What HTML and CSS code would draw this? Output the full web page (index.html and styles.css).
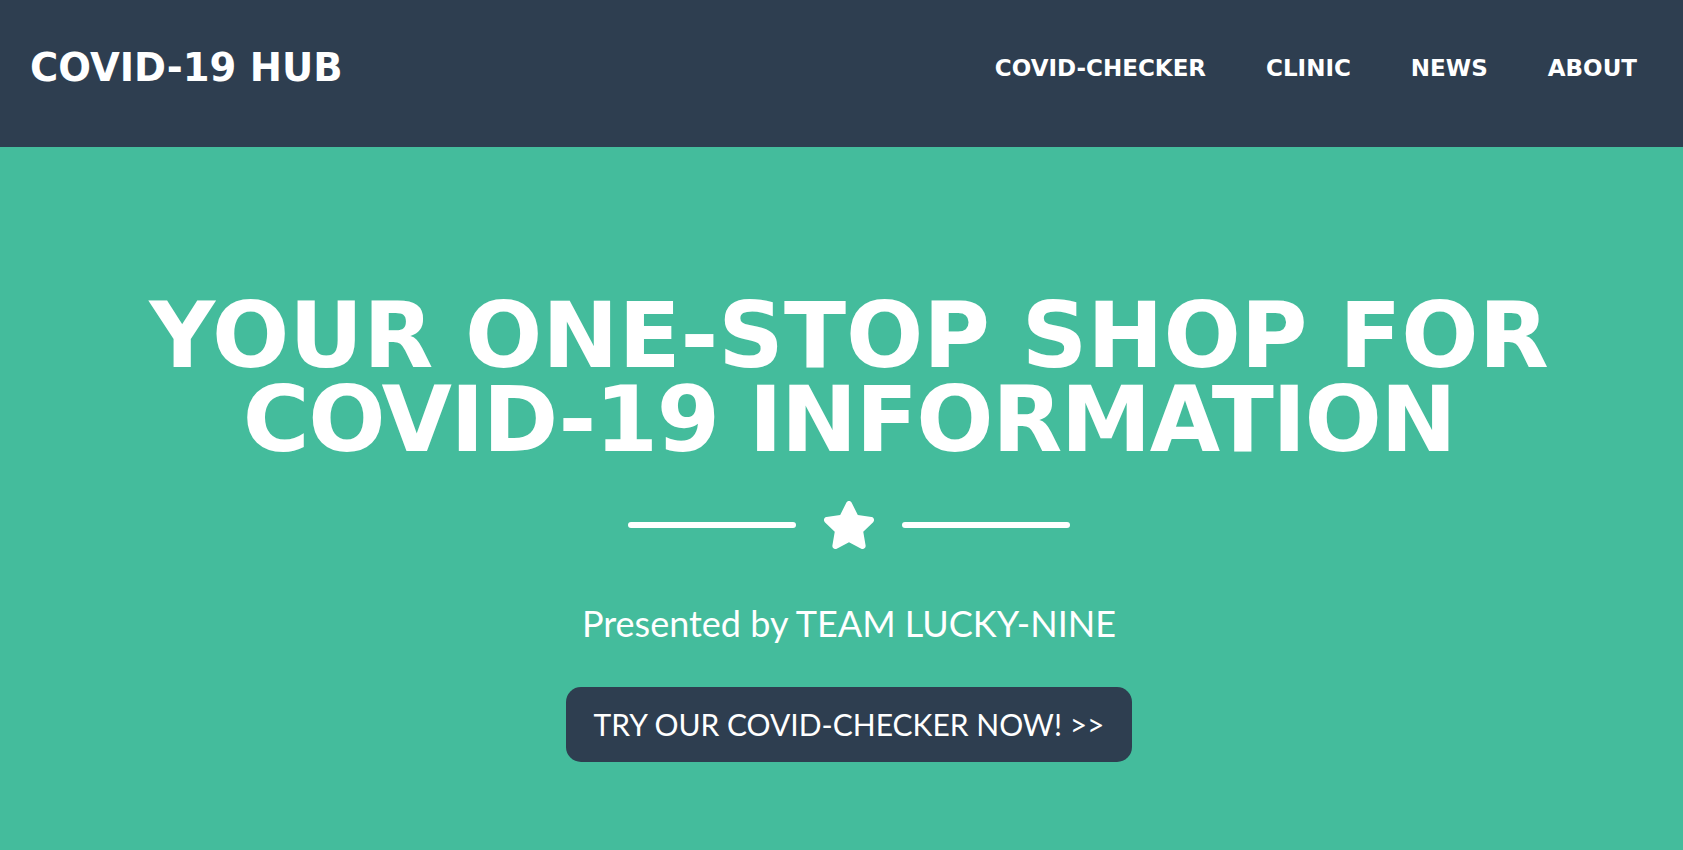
FILE: index.html
```html
<!DOCTYPE html>
<html lang="en">
<head>
<meta charset="utf-8">
<title>COVID-19 HUB</title>
<link rel="stylesheet" href="styles.css">
</head>
<body>
<nav class="navbar">
  <a class="brand" href="#">COVID-19 HUB</a>
  <ul class="nav-links">
    <li><a href="#">COVID-CHECKER</a></li>
    <li><a href="#">CLINIC</a></li>
    <li><a href="#">NEWS</a></li>
    <li><a href="#">ABOUT</a></li>
  </ul>
</nav>
<header class="masthead">
  <h1 class="masthead-heading"><span class="heading-line">YOUR ONE-STOP SHOP FOR</span><span class="heading-line heading-line-2">COVID-19 INFORMATION</span></h1>
  <div class="divider">
    <span class="divider-line"></span>
    <svg class="divider-star" viewBox="0 0 576 512" width="54" height="48" aria-hidden="true"><path fill="#fff" d="M259.3 17.8L194 150.2 47.9 171.5c-26.2 3.8-36.7 36.1-17.7 54.6l105.7 103-25 145.5c-4.5 26.3 23.2 46 46.4 33.7L288 439.6l130.7 68.7c23.2 12.2 50.9-7.4 46.4-33.7l-25-145.5 105.7-103c19-18.5 8.5-50.8-17.7-54.6L382 150.2 316.7 17.8c-11.7-23.6-45.6-23.9-57.4 0z"/></svg>
    <span class="divider-line"></span>
  </div>
  <p class="masthead-subheading">Presented by TEAM LUCKY-NINE</p>
  <a class="btn-cta" href="#">TRY OUR COVID-CHECKER NOW! &gt;&gt;</a>
</header>
</body>
</html>
```
FILE: styles.css
```css
* { box-sizing: border-box; }

html, body {
  margin: 0;
  padding: 0;
}

body {
  background: #44bc9c;
  min-height: 100vh;
  font-family: "Lato", "Liberation Sans", sans-serif;
  color: #fff;
}

.navbar {
  height: 147px;
  background: #2e3e50;
  display: flex;
  align-items: center;
  justify-content: space-between;
  padding: 0 46px 10px 30px;
}

.brand {
  font-family: "DejaVu Sans", sans-serif;
  font-weight: 700;
  font-size: 38.5px;
  line-height: 1;
  color: #fff;
  text-decoration: none;
}

.nav-links {
  list-style: none;
  margin: 0;
  padding: 0;
  display: flex;
  gap: 60px;
}

.nav-links a {
  font-family: "DejaVu Sans", sans-serif;
  font-weight: 700;
  font-size: 23px;
  line-height: 1;
  color: #fff;
  text-decoration: none;
}

.masthead {
  display: flex;
  flex-direction: column;
  align-items: center;
  padding: 147px 0 0 15px;
  text-align: center;
}

.masthead-heading {
  margin: 0;
  display: flex;
  flex-direction: column;
  align-items: center;
  font-family: "DejaVu Sans", sans-serif;
  font-weight: 700;
  font-size: 91px;
  color: #fff;
}

.heading-line {
  display: block;
  height: 84px;
  line-height: 84px;
  white-space: nowrap;
}

.heading-line-2 {
  letter-spacing: -1.5px;
}

.divider {
  display: flex;
  align-items: center;
  gap: 26px;
  margin-top: 39px;
  height: 48px;
}

.divider-line {
  display: block;
  width: 168px;
  height: 6px;
  border-radius: 3px;
  background: #fff;
}

.divider-star {
  display: block;
}

.masthead-subheading {
  margin: 53px 0 0;
  font-family: "Lato", sans-serif;
  font-weight: 400;
  font-size: 36px;
  line-height: 1.2;
}

.btn-cta {
  margin-top: 42px;
  display: inline-block;
  height: 75px;
  line-height: 75px;
  padding: 0 28px;
  border-radius: 15px;
  background: #2e3e50;
  color: #fff;
  text-decoration: none;
  font-family: "Lato", sans-serif;
  font-weight: 400;
  font-size: 30px;
}
```
